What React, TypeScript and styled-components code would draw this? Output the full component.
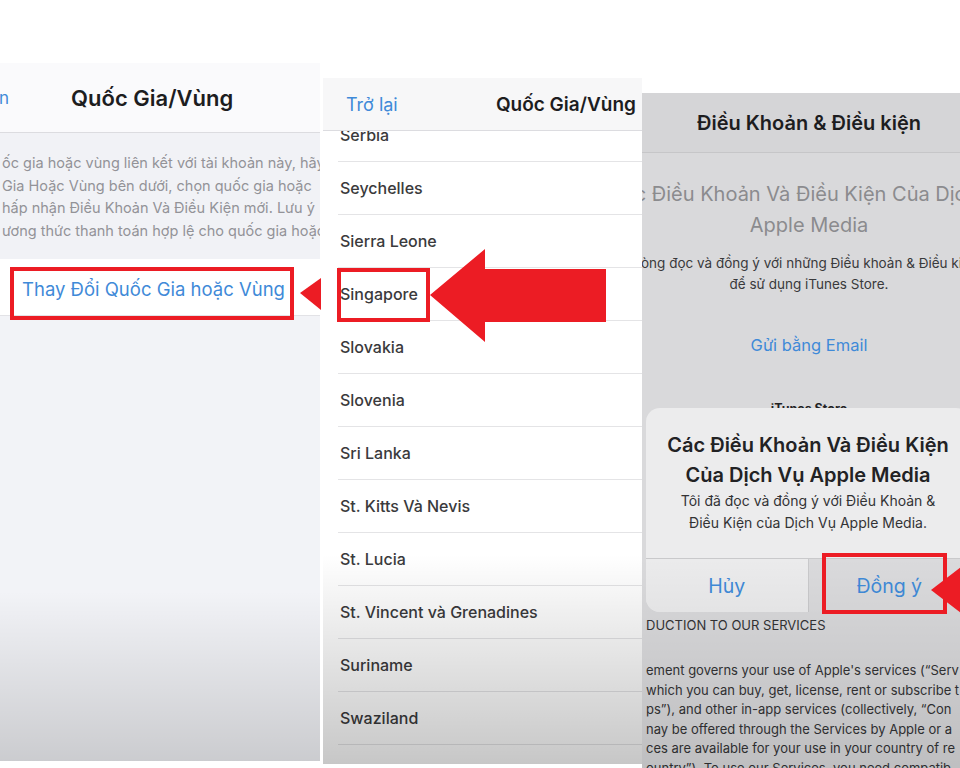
import * as React from "react";
import styled, { createGlobalStyle } from "styled-components";

const GlobalStyle = createGlobalStyle`
  html, body {
    margin: 0;
    padding: 0;
    background: #ffffff;
  }
  body {
    font-family: Inter, "Noto Sans", "Liberation Sans", sans-serif;
    -webkit-font-smoothing: antialiased;
  }
`;

const Page = styled.div`
  position: relative;
  width: 960px;
  height: 768px;
  display: flex;
  align-items: flex-start;
  background: #ffffff;
  overflow: hidden;
`;

const Screen = styled.section<{
  $top: number;
  $left?: number;
  $width: number;
  $height: number;
  $bg: string;
  $shade: number;
  $shadeAlpha: number;
}>`
  position: relative;
  flex: none;
  margin-top: ${(p) => p.$top}px;
  margin-left: ${(p) => p.$left ?? 0}px;
  width: ${(p) => p.$width}px;
  height: ${(p) => p.$height}px;
  background: ${(p) => p.$bg};
  display: flex;
  flex-direction: column;
  overflow: hidden;

  &::after {
    content: "";
    position: absolute;
    left: 0;
    right: 0;
    bottom: 0;
    height: ${(p) => p.$shade}px;
    background: linear-gradient(
      to bottom,
      rgba(0, 0, 0, 0) 0%,
      rgba(0, 0, 0, ${(p) => p.$shadeAlpha}) 100%
    );
    pointer-events: none;
    z-index: 3;
  }
`;

/* ---------- shared nav ---------- */

const NavBar = styled.header<{ $height: number; $bg: string }>`
  position: relative;
  z-index: 2;
  flex: none;
  height: ${(p) => p.$height}px;
  background: ${(p) => p.$bg};
  border-bottom: 1px solid #dcdce0;
  display: flex;
  align-items: center;
`;

const BackLink = styled.span<{ $size: number }>`
  font-size: ${(p) => p.$size}px;
  color: #3f8ad8;
  white-space: nowrap;
`;

const NavTitle = styled.h1<{ $size: number }>`
  margin: 0;
  font-size: ${(p) => p.$size}px;
  font-weight: 600;
  color: #1d1d1f;
  white-space: nowrap;
`;

/* ---------- screen 1 ---------- */

const Description = styled.div`
  flex: none;
  background: #f1f2f6;
  padding: 19px 0 17px 2px;
  font-size: 14.5px;
  line-height: 22.5px;
  color: #939398;
  white-space: nowrap;
`;

const ActionRow = styled.div`
  flex: none;
  height: 57px;
  background: #ffffff;
  border-bottom: 1px solid #e2e2e6;
  display: flex;
  align-items: center;
  padding: 4px 0 0 22px;
  box-sizing: border-box;
  font-size: 18.5px;
  color: #3f8ad8;
  white-space: nowrap;
`;

const Filler = styled.div`
  flex: 1;
  background: #f2f3f7;
`;

/* ---------- screen 2 ---------- */

const CountryList = styled.ul`
  list-style: none;
  margin: -22px 0 0 0;
  padding: 0;
  background: #ffffff;
`;

const CountryRow = styled.li`
  height: 53px;
  margin-left: 15px;
  padding-left: 2px;
  box-sizing: border-box;
  border-bottom: 1px solid #e4e4e6;
  display: flex;
  align-items: center;
  font-size: 16px;
  font-weight: 500;
  color: #3a3a3c;
  white-space: nowrap;
`;

/* ---------- screen 3 ---------- */

const TermsBody = styled.div`
  flex: 1;
  display: flex;
  flex-direction: column;
  align-items: center;
  background: #d9d9db;
`;

const CenterLine = styled.div<{
  $size: number;
  $lh: number;
  $color: string;
  $weight?: number;
  $mt?: number;
}>`
  margin-top: ${(p) => p.$mt ?? 0}px;
  font-size: ${(p) => p.$size}px;
  line-height: ${(p) => p.$lh}px;
  font-weight: ${(p) => p.$weight ?? 400};
  color: ${(p) => p.$color};
  white-space: nowrap;
`;

const LegalBlock = styled.div`
  align-self: stretch;
  margin-top: 199px;
  padding-left: 4px;
  color: #333335;
  white-space: nowrap;
`;

const LegalHeading = styled.div`
  font-size: 13px;
  line-height: 18px;
`;

const LegalText = styled.div`
  margin-top: 27px;
  font-size: 13px;
  line-height: 19.5px;
`;

const Alert = styled.div`
  position: absolute;
  top: 315px;
  left: 4px;
  width: 324px;
  border-radius: 14px;
  background: #ececed;
  overflow: hidden;
  z-index: 2;
  display: flex;
  flex-direction: column;
`;

const AlertText = styled.div`
  padding: 22px 12px 24px;
  text-align: center;
  color: #222224;
`;

const AlertTitle = styled.div`
  font-size: 20px;
  line-height: 30px;
  font-weight: 600;
`;

const AlertMessage = styled.div`
  font-size: 14px;
  line-height: 22px;
  color: #333335;
`;

const AlertActions = styled.div`
  display: flex;
  height: 53px;
  border-top: 1px solid #c9c9cb;
`;

const AlertButton = styled.div<{ $pressed?: boolean }>`
  flex: 1;
  display: flex;
  align-items: center;
  justify-content: center;
  font-size: 19.5px;
  color: #3f8ad8;
  background: ${(p) => (p.$pressed ? "#dadadc" : "#ebebec")};
  & + & {
    border-left: 1px solid #c9c9cb;
  }
`;

/* ---------- annotations ---------- */

const Markup = styled.svg`
  position: absolute;
  inset: 0;
  pointer-events: none;
  z-index: 10;
`;

const RED = "#ec1c24";

const countries = [
  "Serbia",
  "Seychelles",
  "Sierra Leone",
  "Singapore",
  "Slovakia",
  "Slovenia",
  "Sri Lanka",
  "St. Kitts Và Nevis",
  "St. Lucia",
  "St. Vincent và Grenadines",
  "Suriname",
  "Swaziland",
  "Tajikistan",
];

const descriptionLines = [
  "ốc gia hoặc vùng liên kết với tài khoản này, hãy",
  " Gia Hoặc Vùng bên dưới, chọn quốc gia hoặc",
  "hấp nhận Điều Khoản Và Điều Kiện mới. Lưu ý",
  "ương thức thanh toán hợp lệ cho quốc gia hoặc",
];

const legalLines = [
  "ement governs your use of Apple's services (“Serv",
  "which you can buy, get, license, rent or subscribe t",
  "ps”), and other in-app services (collectively, “Con",
  "nay be offered through the Services by Apple or a",
  "ces are available for your use in your country of re",
  "ountry”). To use our Services, you need compatib",
];

export default function App() {
  return (
    <>
      <GlobalStyle />
      <Page>
        <Screen $top={63} $width={320} $height={698} $bg="#f2f3f7" $shade={170} $shadeAlpha={0.16}>
          <NavBar $height={69} $bg="#fafafc">
            <BackLink $size={17} style={{ marginLeft: -1 }}>n</BackLink>
            <NavTitle $size={22} style={{ marginLeft: 62 }}>
              Quốc Gia/Vùng
            </NavTitle>
          </NavBar>
          <Description>
            {descriptionLines.map((l) => (
              <div key={l}>{l}</div>
            ))}
          </Description>
          <ActionRow>Thay Đổi Quốc Gia hoặc Vùng</ActionRow>
          <Filler />
        </Screen>

        <Screen $top={78} $left={3} $width={319} $height={686} $bg="#ffffff" $shade={210} $shadeAlpha={0.22}>
          <NavBar $height={52} $bg="#f7f7f8" style={{ justifyContent: "space-between", padding: "0 6px 0 23px" }}>
            <BackLink $size={18}>Trở lại</BackLink>
            <NavTitle $size={19}>Quốc Gia/Vùng</NavTitle>
          </NavBar>
          <CountryList>
            {countries.map((c) => (
              <CountryRow key={c}>{c}</CountryRow>
            ))}
          </CountryList>
        </Screen>

        {/* the third phone screen is wider than the frame: its right edge is cropped */}
        <Screen $top={93} $width={334} $height={675} $bg="#d9d9db" $shade={210} $shadeAlpha={0.12}>
          <NavBar $height={59} $bg="#d5d5d7" style={{ justifyContent: "center", borderBottomColor: "#c6c6c8" }}>
            <NavTitle $size={20}>Điều Khoản &amp; Điều kiện</NavTitle>
          </NavBar>
          <TermsBody>
            <CenterLine $size={20} $lh={31} $color="#8b8b8e" $mt={26}>
              Các Điều Khoản Và Điều Kiện Của Dịch Vụ
            </CenterLine>
            <CenterLine $size={20} $lh={31} $color="#8b8b8e">
              Apple Media
            </CenterLine>
            <CenterLine $size={13.5} $lh={21} $color="#3a3a3c" $mt={12}>
              Vui lòng đọc và đồng ý với những Điều khoản &amp; Điều kiện này
            </CenterLine>
            <CenterLine $size={13.5} $lh={21} $color="#3a3a3c">
              để sử dụng iTunes Store.
            </CenterLine>
            <CenterLine $size={16.5} $lh={20} $color="#3f8ad8" $mt={40}>
              Gửi bằng Email
            </CenterLine>
            <CenterLine $size={12.5} $lh={16} $color="#222224" $weight={700} $mt={46}>
              iTunes Store
            </CenterLine>
            <LegalBlock>
              <LegalHeading>DUCTION TO OUR SERVICES</LegalHeading>
              <LegalText>
                {legalLines.map((l) => (
                  <div key={l}>{l}</div>
                ))}
              </LegalText>
            </LegalBlock>
          </TermsBody>
          <Alert>
            <AlertText>
              <AlertTitle>
                Các Điều Khoản Và Điều Kiện
                <br />
                Của Dịch Vụ Apple Media
              </AlertTitle>
              <AlertMessage>
                Tôi đã đọc và đồng ý với Điều Khoản &amp;
                <br />
                Điều Kiện của Dịch Vụ Apple Media.
              </AlertMessage>
            </AlertText>
            <AlertActions>
              <AlertButton>Hủy</AlertButton>
              <AlertButton $pressed>Đồng ý</AlertButton>
            </AlertActions>
          </Alert>
        </Screen>

        <Markup width={960} height={768} viewBox="0 0 960 768">
          <rect x={12} y={269} width={280} height={49} fill="none" stroke={RED} strokeWidth={4} />
          <polygon points="300,293 321,278 321,310" fill={RED} />
          <rect x={339} y={270} width={89} height={50} fill="none" stroke={RED} strokeWidth={4} />
          <polygon points="430,295 485,249 485,269 606,269 606,322 485,322 485,342" fill={RED} />
          <rect x={824} y={555} width={121} height={57} fill="none" stroke={RED} strokeWidth={4} />
          <polygon points="931,590 961,567 961,613" fill={RED} />
        </Markup>
      </Page>
    </>
  );
}
